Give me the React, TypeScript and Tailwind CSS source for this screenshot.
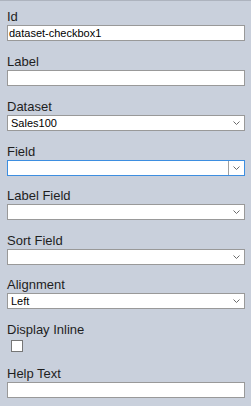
import React from 'react';

const Chevron = () => (
  <svg width="7" height="4" viewBox="0 0 7 4" className="block">
    <path d="M0.5 0.5 L3.5 3.5 L6.5 0.5" fill="none" stroke="#6b6b6b" strokeWidth="1" />
  </svg>
);

const Label = ({ children }: { children: React.ReactNode }) => (
  <div className="text-[13px] leading-[17px] text-[#1e1e1e]">{children}</div>
);

const TextBox = ({ value = '' }: { value?: string }) => (
  <div className="h-[16px] bg-white border border-[#999999] pl-[1px] text-[11px] leading-[14px] text-black whitespace-nowrap overflow-hidden">
    {value}
  </div>
);

const SelectBox = ({ value = '', focused = false }: { value?: string; focused?: boolean }) =>
  focused ? (
    <div className="h-[16px] bg-white border border-[#3d8ee0] flex">
      <div className="flex-1 pl-[3px] text-[11px] leading-[14px] text-black">{value}</div>
      <div className="w-[16px] border-l border-[#a0a0a0] flex items-center justify-center">
        <Chevron />
      </div>
    </div>
  ) : (
    <div className="h-[16px] bg-white border border-[#999999] flex items-center pr-[4px]">
      <div className="flex-1 pl-[3px] text-[11px] leading-[14px] text-black">{value}</div>
      <Chevron />
    </div>
  );

export default function App() {
  return (
    <div
      className="w-[251px] h-[406px] bg-[#c9d0dc] border-t border-[#adb3be] pt-[7px] pl-[7px] pr-[6px] overflow-hidden"
      style={{ fontFamily: '"Liberation Sans", Arial, sans-serif' }}
    >
      <div className="mb-[12px]">
        <Label>Id</Label>
        <TextBox value="dataset-checkbox1" />
      </div>
      <div className="mb-[12px]">
        <Label>Label</Label>
        <TextBox />
      </div>
      <div className="mb-[12px]">
        <Label>Dataset</Label>
        <SelectBox value="Sales100" />
      </div>
      <div className="mb-[11px]">
        <Label>Field</Label>
        <SelectBox focused />
      </div>
      <div className="mb-[12px]">
        <Label>Label Field</Label>
        <SelectBox />
      </div>
      <div className="mb-[11px]">
        <Label>Sort Field</Label>
        <SelectBox />
      </div>
      <div className="mb-[12px]">
        <Label>Alignment</Label>
        <SelectBox value="Left" />
      </div>
      <div className="mb-[13px]">
        <Label>Display Inline</Label>
        <div className="mt-[2px] ml-[4px] w-[12px] h-[12px] bg-white border border-[#767676]" />
      </div>
      <div>
        <Label>Help Text</Label>
        <TextBox />
      </div>
    </div>
  );
}
